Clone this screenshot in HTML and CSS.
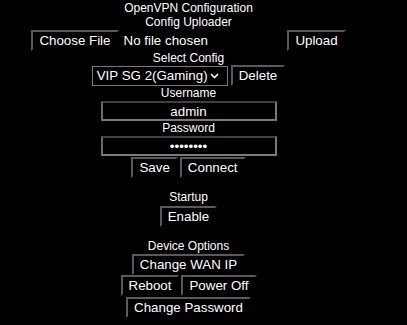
FILE: index.html
```html
<!DOCTYPE html>
<html>
<head>
<meta charset="utf-8">
<link rel="stylesheet" href="styles.css">
</head>
<body>
<main class="panel">
  <div class="label">OpenVPN Configuration</div>
  <div class="label">Config Uploader</div>
  <div class="row file-row">
    <div class="file">
      <button class="btn">Choose File</button>
      <span class="file-text">No file chosen</span>
    </div>
    <button class="btn">Upload</button>
  </div>
  <div class="label">Select Config</div>
  <div class="row select-row">
    <div class="select">
      <span>VIP SG 2(Gaming)</span>
      <svg class="chev" width="9" height="6" viewBox="0 0 9 6"><path d="M1 1 L4.5 4.5 L8 1" fill="none" stroke="#fff" stroke-width="1.6"/></svg>
    </div>
    <button class="btn">Delete</button>
  </div>
  <div class="label">Username</div>
  <div class="row gap1"><input class="field" type="text" value="admin"></div>
  <div class="label">Password</div>
  <div class="row gap1"><input class="field" type="password" value="12345678"></div>
  <div class="row pair gap1">
    <button class="btn">Save</button>
    <button class="btn">Connect</button>
  </div>
  <div class="label section">Startup</div>
  <div class="row gap2"><button class="btn">Enable</button></div>
  <div class="label section">Device Options</div>
  <div class="row gap1"><button class="btn">Change WAN IP</button></div>
  <div class="row pair">
    <button class="btn">Reboot</button>
    <button class="btn">Power Off</button>
  </div>
  <div class="row gap1"><button class="btn">Change Password</button></div>
</main>
</body>
</html>
```
FILE: styles.css
```css
html, body {
  margin: 0;
  background: #000;
}
body {
  padding-top: 1px;
  font-family: "Liberation Sans", Arial, sans-serif;
  color: #fff;
}
.panel {
  width: 377px;
  display: flex;
  flex-direction: column;
  align-items: center;
}
.label {
  font-size: 12px;
  line-height: 14px;
  height: 14px;
  text-align: center;
}
.section {
  margin-top: 12px;
}
.row {
  display: flex;
  justify-content: center;
  align-items: flex-start;
}
.gap1 {
  margin-top: 1px;
}
.gap2 {
  margin-top: 2px;
}
.file-row {
  gap: 3px;
  margin-top: 1px;
}
.file {
  width: 253px;
  display: flex;
  align-items: center;
  gap: 5px;
}
.file-text {
  font-size: 13.333px;
  line-height: 15px;
}
.btn {
  font-family: "Liberation Sans", Arial, sans-serif;
  font-size: 13.333px;
  line-height: 15px;
  color: #fff;
  background: #000;
  margin: 0;
  padding: 1px 6px;
  border-style: solid;
  border-width: 2px;
  border-color: #5a5a5a #000 #000 #5a5a5a;
  height: 21px;
  box-sizing: border-box;
  white-space: nowrap;
  cursor: pointer;
}
.select-row {
  gap: 3px;
}
.select {
  margin-top: 1px;
  width: 136px;
  height: 20px;
  box-sizing: border-box;
  border: 1px solid #7a7a7a;
  font-size: 13.333px;
  line-height: 16px;
  display: flex;
  align-items: center;
  justify-content: space-between;
  padding: 0 8px 0 4px;
}
.chev {
  display: block;
}
.pair {
  gap: 2px;
}
.field {
  width: 176px;
  height: 20px;
  box-sizing: border-box;
  margin: 0;
  padding: 0 2px;
  background: #000;
  color: #fff;
  font-family: "Liberation Sans", Arial, sans-serif;
  font-size: 13.333px;
  text-align: center;
  border-width: 2px;
  border-style: solid;
  border-color: #404040 #7a7a7a #7a7a7a #6a6a6a;
  outline: none;
}
```
